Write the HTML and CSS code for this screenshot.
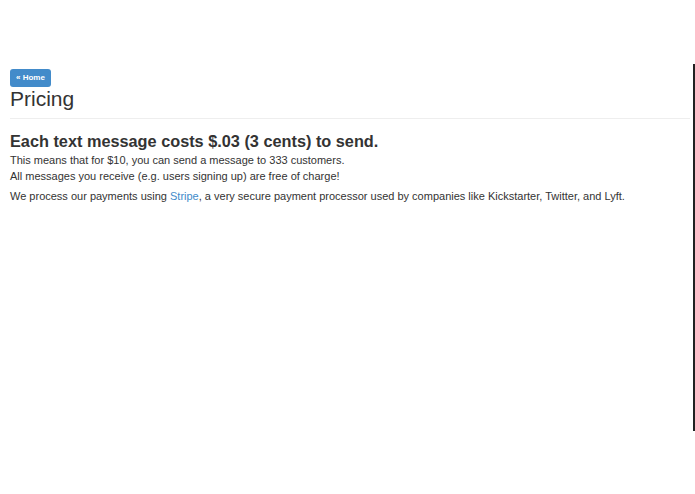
FILE: index.html
```html
<!DOCTYPE html>
<html>
<head>
<meta charset="utf-8">
<link rel="stylesheet" href="styles.css">
</head>
<body>
<div class="edge"></div>
<div class="container">
  <div class="page-header">
    <a class="btn" href="#">« Home</a>
    <h1>Pricing</h1>
  </div>
  <h2>Each text message costs $.03 (3 cents) to send.</h2>
  <p>This means that for $10, you can send a message to 333 customers.<br>All messages you receive (e.g. users signing up) are free of charge!</p>
  <p>We process our payments using <a class="link" href="#">Stripe</a>, a very secure payment processor used by companies like Kickstarter, Twitter, and Lyft.</p>
</div>
</body>
</html>
```
FILE: styles.css
```css
html, body {
  margin: 0;
  padding: 0;
  background: #fff;
}
body {
  font-family: "Liberation Sans", Arial, sans-serif;
  color: #333;
  font-size: 11px;
  line-height: 16px;
}
.container {
  padding: 69px 5px 0 10px;
}
.page-header {
  display: flex;
  flex-direction: column;
  align-items: flex-start;
  border-bottom: 1px solid #eee;
  padding-bottom: 7px;
  margin-bottom: 12px;
}
.btn {
  display: block;
  white-space: nowrap;
  background: #428bca;
  color: #fff;
  font-size: 8px;
  line-height: 18px;
  height: 18px;
  padding: 0 6px;
  border-radius: 3px;
  text-decoration: none;
  font-weight: bold;
}
h1 {
  margin: 0;
  font-size: 21px;
  line-height: 24px;
  font-weight: normal;
}
h2 {
  margin: 0;
  font-size: 16.3px;
  line-height: 21px;
  font-weight: bold;
}
p {
  margin: 0 0 4px;
}
.link {
  color: #428bca;
  text-decoration: none;
}
.edge {
  position: absolute;
  left: 693px;
  top: 64px;
  width: 2px;
  height: 367px;
  background: #222;
}
```
